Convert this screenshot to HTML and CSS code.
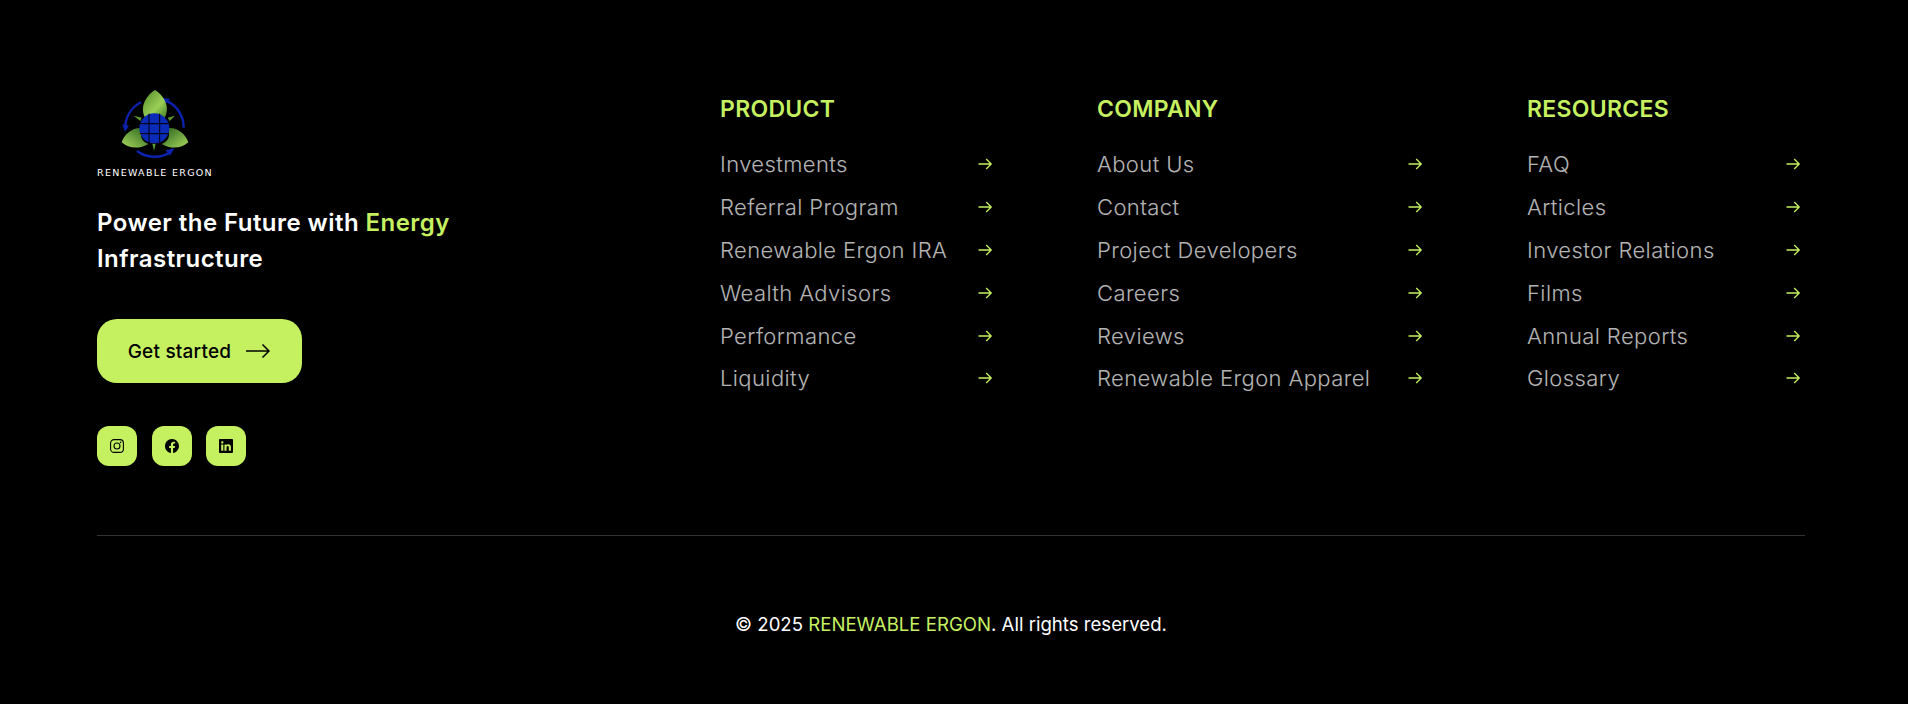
FILE: index.html
```html
<!DOCTYPE html>
<html lang="en">
<head>
    <meta charset="UTF-8">
    <title>Renewable Ergon</title>
    <link rel="stylesheet" href="styles.css">
</head>
<body>

<svg class="icon-defs" width="0" height="0">
    <defs>
        <symbol id="arrow" viewBox="0 0 24 24">
            <path d="M5.500 12H18.200M13.200 7L18.200 12L13.200 17" fill="none" stroke="currentColor" stroke-width="1.300"/>
        </symbol>
        <linearGradient id="leafTop" x1="0" y1="0" x2="1" y2="1">
            <stop offset="0" stop-color="#4f8a2a"/>
            <stop offset="0.6" stop-color="#9ccf56"/>
            <stop offset="1" stop-color="#3f7a22"/>
        </linearGradient>
        <linearGradient id="leafLeft" x1="0" y1="1" x2="1" y2="0">
            <stop offset="0" stop-color="#a9d95e"/>
            <stop offset="1" stop-color="#245f1a"/>
        </linearGradient>
        <linearGradient id="leafRight" x1="1" y1="1" x2="0" y2="0">
            <stop offset="0" stop-color="#a9d95e"/>
            <stop offset="1" stop-color="#245f1a"/>
        </linearGradient>
    </defs>
</svg>

<footer class="footer">
    <div class="footer-top">
        <div class="brand">
            <div class="logo">
                <svg class="logo-mark" viewBox="0 0 240 240">
                    <g fill="none" stroke="#0c22b0" stroke-width="7">
                        <path d="M78 52A88 88 0 0 0 31 122"/>
                        <path d="M152 46A88 88 0 0 1 206 128"/>
                        <path d="M66 198A88 88 0 0 0 168 200"/>
                    </g>
                    <g fill="#0c22b0">
                        <path d="M22 118L42 122L30 140Z"/>
                        <path d="M140 38L165 42L150 58Z"/>
                        <path d="M178 190L165 212L152 196Z"/>
                    </g>
                    <path d="M120 15C152 35 166 72 148 100C135 84 105 84 92 100C74 72 88 35 120 15Z" fill="url(#leafTop)"/>
                    <path d="M20 172C28 145 58 124 84 130C72 148 78 170 100 177C72 194 40 190 20 172Z" fill="url(#leafLeft)"/>
                    <path d="M220 172C212 145 182 124 156 130C168 148 162 170 140 177C168 194 200 190 220 172Z" fill="url(#leafRight)"/>
                    <g fill="#5c9a30">
                        <path d="M56 92L80 98L76 108Z"/>
                        <path d="M180 92L158 98L164 108Z"/>
                        <path d="M117 198L112 176H122Z"/>
                    </g>
                    <circle cx="118" cy="130" r="45" fill="#0a2ab8"/>
                    <path d="M75 116H161M75 146H161M102 86V174M134 86V174" fill="none" stroke="#000" stroke-width="3"/>
                </svg>
                <span class="logo-name">RENEWABLE ERGON</span>
            </div>
            <p class="tagline">Power the Future with <span class="accent">Energy</span><br>Infrastructure</p>
            <a class="cta" href="#">
                Get started
                <svg width="26" height="16" viewBox="0 0 26 16"><path d="M1 8H24M17.500 1.500L24 8L17.500 14.500" fill="none" stroke="currentColor" stroke-width="1.500"/></svg>
            </a>
            <div class="socials">
                <a href="#"><svg width="14" height="14" viewBox="0 0 14 14"><g fill="none" stroke="currentColor" stroke-width="1.100"><rect x="0.600" y="0.600" width="12.800" height="12.800" rx="3.500"/><circle cx="7" cy="7" r="3"/></g><circle cx="10.600" cy="3.400" r="0.800" fill="currentColor"/></svg></a>
                <a href="#"><svg width="14" height="14" viewBox="0 0 16 16"><path fill="currentColor" d="M16 8.049c0-4.446-3.582-8.050-8-8.050C3.580 0-.002 3.603-.002 8.050c0 4.017 2.926 7.347 6.750 7.951v-5.625h-2.030V8.050H6.750V6.275c0-2.017 1.195-3.131 3.022-3.131.876 0 1.791.157 1.791.157v1.980h-1.009c-.993 0-1.303.621-1.303 1.258v1.510h2.218l-.354 2.326H9.250V16c3.824-.604 6.750-3.934 6.750-7.951"/></svg></a>
                <a href="#"><svg width="14" height="14" viewBox="0 0 16 16"><path fill="currentColor" d="M0 1.146C0 .513.526 0 1.175 0h13.650C15.474 0 16 .513 16 1.146v13.708c0 .633-.526 1.146-1.175 1.146H1.175C.526 16 0 15.487 0 14.854zm4.943 12.248V6.169H2.542v7.225zm-1.200-8.212c.837 0 1.358-.554 1.358-1.248-.015-.709-.520-1.248-1.342-1.248S2.400 3.226 2.400 3.934c0 .694.521 1.248 1.327 1.248zm4.908 8.212V9.359c0-.216.016-.432.080-.586.173-.431.568-.878 1.232-.878.869 0 1.216.662 1.216 1.634v3.865h2.401V9.250c0-2.220-1.184-3.252-2.764-3.252-1.274 0-1.845.700-2.165 1.193v.025h-.016l.016-.025V6.169h-2.400c.030.678 0 7.225 0 7.225z"/></svg></a>
            </div>
        </div>

        <div class="link-col col-product">
            <h4>PRODUCT</h4>
            <ul>
                <li><a href="#">Investments</a><svg><use href="#arrow"/></svg></li>
                <li><a href="#">Referral Program</a><svg><use href="#arrow"/></svg></li>
                <li><a href="#">Renewable Ergon IRA</a><svg><use href="#arrow"/></svg></li>
                <li><a href="#">Wealth Advisors</a><svg><use href="#arrow"/></svg></li>
                <li><a href="#">Performance</a><svg><use href="#arrow"/></svg></li>
                <li><a href="#">Liquidity</a><svg><use href="#arrow"/></svg></li>
            </ul>
        </div>

        <div class="link-col col-company">
            <h4>COMPANY</h4>
            <ul>
                <li><a href="#">About Us</a><svg><use href="#arrow"/></svg></li>
                <li><a href="#">Contact</a><svg><use href="#arrow"/></svg></li>
                <li><a href="#">Project Developers</a><svg><use href="#arrow"/></svg></li>
                <li><a href="#">Careers</a><svg><use href="#arrow"/></svg></li>
                <li><a href="#">Reviews</a><svg><use href="#arrow"/></svg></li>
                <li><a href="#">Renewable Ergon Apparel</a><svg><use href="#arrow"/></svg></li>
            </ul>
        </div>

        <div class="link-col col-resources">
            <h4>RESOURCES</h4>
            <ul>
                <li><a href="#">FAQ</a><svg><use href="#arrow"/></svg></li>
                <li><a href="#">Articles</a><svg><use href="#arrow"/></svg></li>
                <li><a href="#">Investor Relations</a><svg><use href="#arrow"/></svg></li>
                <li><a href="#">Films</a><svg><use href="#arrow"/></svg></li>
                <li><a href="#">Annual Reports</a><svg><use href="#arrow"/></svg></li>
                <li><a href="#">Glossary</a><svg><use href="#arrow"/></svg></li>
            </ul>
        </div>
    </div>

    <div class="footer-bottom">
        &copy; 2025 <span class="accent">RENEWABLE ERGON</span>. All rights reserved.
    </div>
</footer>

</body>
</html>
```

FILE: styles.css
```css
* {
    margin: 0;
    padding: 0;
    box-sizing: border-box;
    font-family: Inter, "Noto Sans", sans-serif;
}

body {
    background-color: #000;
    color: #fff;
}

a {
    color: inherit;
    text-decoration: none;
}

.icon-defs {
    display: block;
    height: 0;
}

.accent {
    color: #c5f161;
}

.footer {
    min-height: 100vh;
    padding: 85px 103px 0 97px;
}

.footer-top {
    display: flex;
    gap: 100px;
    height: 451px;
    border-bottom: 1px solid #333;
}

.brand {
    flex: 1;
}

.logo {
    display: flex;
    flex-direction: column;
    align-items: center;
    width: 116px;
    height: 94px;
}

.logo-mark {
    width: 80px;
    height: 80px;
    flex-shrink: 0;
}

.logo-name {
    font-family: "DejaVu Sans", sans-serif;
    font-size: 9.500px;
    line-height: 10px;
    letter-spacing: 1.300px;
    white-space: nowrap;
    margin-top: 3px;
}

.tagline {
    margin-top: 26px;
    font-size: 24px;
    font-weight: 600;
    line-height: 36px;
    letter-spacing: 0.450px;
}

.cta {
    display: flex;
    align-items: center;
    justify-content: center;
    gap: 14px;
    width: 205px;
    height: 64px;
    margin-top: 42px;
    background-color: #c5f161;
    color: #000;
    border-radius: 20px;
    font-size: 19px;
    font-weight: 500;
    letter-spacing: 0.200px;
}

.socials {
    display: flex;
    gap: 14.500px;
    margin-top: 43px;
}

.socials a {
    display: flex;
    align-items: center;
    justify-content: center;
    width: 40px;
    height: 40px;
    background-color: #c5f161;
    color: #000;
    border-radius: 12px;
}

.col-product {
    width: 277px;
}

.col-company {
    width: 330px;
}

.col-resources {
    width: 278px;
}

.link-col h4 {
    margin-top: 10px;
    font-size: 23px;
    font-weight: 600;
    line-height: 28px;
    letter-spacing: 0.300px;
    color: #c5f161;
}

.link-col ul {
    list-style: none;
    margin-top: 20px;
}

.link-col li {
    display: flex;
    align-items: center;
    justify-content: space-between;
    height: 42.800px;
    font-size: 22px;
    font-weight: 300;
    letter-spacing: 0.400px;
    white-space: nowrap;
}

.link-col li a {
    opacity: 0.700;
}

.link-col li svg {
    width: 24px;
    height: 24px;
    color: #c5f161;
}

.footer-bottom {
    padding-top: 75px;
    text-align: center;
    font-size: 18.600px;
    line-height: 26px;
}
```
